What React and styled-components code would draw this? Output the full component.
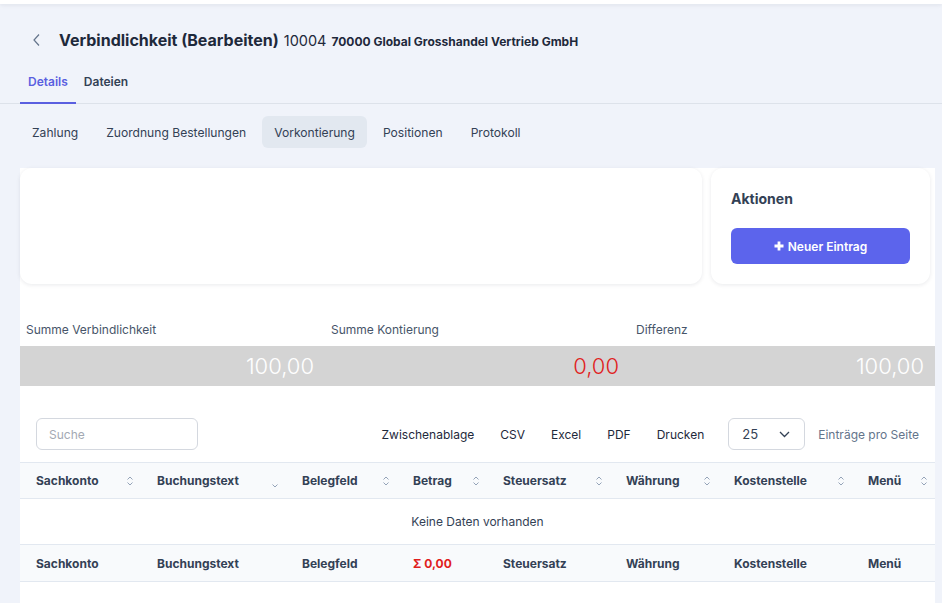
import styled, { createGlobalStyle } from 'styled-components'

const GlobalStyle = createGlobalStyle`
  * { box-sizing: border-box; }
  body {
    margin: 0;
    background: #f0f3fa;
    font-family: Inter, "Noto Sans", sans-serif;
    color: #1e293b;
  }
`

const COLUMNS = '121px 145px 111px 90px 123px 108px 134px 83px'

const TopStrip = styled.div`
  height: 4px;
  background: #ffffff;
  box-shadow: 0 1px 4px rgba(15, 23, 42, 0.08);
`

const Header = styled.header`
  display: flex;
  align-items: center;
  height: 60px;
  padding: 11px 0 0 32px;
`

const TitleLine = styled.div`
  display: flex;
  align-items: baseline;
  gap: 5px;
`

const BackButton = styled.span`
  display: inline-flex;
  margin-right: 17px;
  color: #64748b;
`

const Title = styled.h1`
  margin: 0;
  font-size: 16px;
  font-weight: 700;
  color: #1e293b;
`

const Number = styled.span`
  font-size: 14.5px;
  font-weight: 400;
  color: #1e293b;
`

const Company = styled.span`
  font-size: 12px;
  font-weight: 700;
  color: #1e293b;
`

const TabBar = styled.nav`
  display: flex;
  padding: 0 20px;
  border-bottom: 1px solid #dde2ea;
`

const Tab = styled.div`
  padding: 10px 8px 13px;
  font-size: 12px;
  font-weight: 600;
  color: ${p => (p.$active ? '#5a5fe0' : '#334155')};
  border-bottom: 2px solid ${p => (p.$active ? '#5a5fe0' : 'transparent')};
  margin-bottom: -1px;
`

const Content = styled.main`
  padding: 12px 7px 0 20px;
`

const SubTabs = styled.div`
  display: flex;
  gap: 4px;
`

const SubTab = styled.div`
  height: 32px;
  display: flex;
  align-items: center;
  padding: 0 12px;
  border-radius: 6px;
  font-size: 12.1px;
  color: #334155;
  background: ${p => (p.$active ? '#e2e8f0' : 'transparent')};
`

const Panel = styled.section`
  margin-top: 20px;
  background: #ffffff;
`

const CardRow = styled.div`
  display: grid;
  grid-template-columns: 682px 219px;
  gap: 9px;
`

const Card = styled.div`
  height: 116px;
  background: #ffffff;
  border-radius: 12px;
  box-shadow: 0 1px 4px rgba(15, 23, 42, 0.09);
  padding: ${p => (p.$padded ? '22px 20px' : '0')};
`

const CardTitle = styled.h3`
  margin: 0;
  font-size: 14px;
  font-weight: 700;
  color: #334155;
`

const PrimaryButton = styled.button`
  margin-top: 21px;
  width: 179px;
  height: 36px;
  border: none;
  border-radius: 6px;
  background: #5c64ec;
  color: #ffffff;
  font-family: inherit;
  font-size: 12px;
  font-weight: 600;
  display: flex;
  align-items: center;
  justify-content: center;
  gap: 4px;
`

const Summary = styled.div`
  margin-top: 38px;
  display: grid;
  grid-template-columns: repeat(3, 1fr);
`

const SummaryLabel = styled.div`
  padding: 0 6px 9px;
  font-size: 12px;
  color: #475569;
`

const SummaryValue = styled.div`
  height: 40px;
  display: flex;
  align-items: center;
  justify-content: flex-end;
  padding-right: 11px;
  background: #d4d4d4;
  font-size: 22px;
  font-weight: 300;
  color: ${p => (p.$negative ? '#e01e1e' : '#ffffff')};
`

const Toolbar = styled.div`
  display: flex;
  align-items: center;
  padding: 32px 16px 12px;
`

const Search = styled.input`
  width: 162px;
  height: 32px;
  border: 1px solid #d4d8df;
  border-radius: 6px;
  padding: 0 12px;
  font-family: inherit;
  font-size: 12px;
  color: #1e293b;
  &::placeholder { color: #a3a9b3; }
`

const ExportGroup = styled.div`
  display: flex;
  margin-left: auto;
  margin-right: 11px;
`

const ExportButton = styled.span`
  padding: 0 13px;
  font-size: 12px;
  color: #1e293b;
`

const PageSize = styled.div`
  width: 77px;
  height: 32px;
  border: 1px solid #d4d8df;
  border-radius: 6px;
  display: flex;
  align-items: center;
  justify-content: space-between;
  padding: 0 14px 0 13px;
  font-size: 13px;
  color: #334155;
`

const PageSizeLabel = styled.span`
  margin-left: 13px;
  font-size: 12px;
  color: #64748b;
`

const Row = styled.div`
  display: grid;
  grid-template-columns: ${COLUMNS};
  height: ${p => p.$height || 37}px;
  background: ${p => (p.$shaded ? '#f8fafc' : '#ffffff')};
  border-top: ${p => (p.$top ? '1px solid #e2e8f0' : 'none')};
  border-bottom: 1px solid #e2e8f0;
`

const HeadCell = styled.div`
  display: flex;
  align-items: center;
  justify-content: space-between;
  padding: 0 7px 0 16px;
  font-size: 12px;
  font-weight: 700;
  color: ${p => (p.$red ? '#e01e1e' : '#334155')};
`

const EmptyCell = styled.div`
  grid-column: 1 / -1;
  display: flex;
  align-items: center;
  justify-content: center;
  font-size: 12px;
  color: #334155;
`

const Spacer = styled.div`
  height: 40px;
`

const SortIcon = ({ down }) =>
  down ? (
    <svg width="8" height="14" viewBox="0 0 8 14" fill="none" stroke="#94a3b8" strokeWidth="1" style={{ marginTop: 10 }}>
      <path d="M1.5 5.5 L4 8 L6.5 5.5" />
    </svg>
  ) : (
    <svg width="8" height="12" viewBox="0 0 8 12" fill="none" stroke="#94a3b8" strokeWidth="1">
      <path d="M1.5 4.5 L4 2 L6.5 4.5" />
      <path d="M1.5 7.5 L4 10 L6.5 7.5" />
    </svg>
  )

const columns = [
  { label: 'Sachkonto' },
  { label: 'Buchungstext', down: true },
  { label: 'Belegfeld' },
  { label: 'Betrag', footer: 'Σ 0,00' },
  { label: 'Steuersatz' },
  { label: 'Währung' },
  { label: 'Kostenstelle' },
  { label: 'Menü' },
]

const subTabs = ['Zahlung', 'Zuordnung Bestellungen', 'Vorkontierung', 'Positionen', 'Protokoll']

const sums = [
  { label: 'Summe Verbindlichkeit', value: '100,00' },
  { label: 'Summe Kontierung', value: '0,00', negative: true },
  { label: 'Differenz', value: '100,00' },
]

const App = () => {
  return (
    <>
      <GlobalStyle />
      <TopStrip />
      <Header>
        <BackButton>
          <svg width="10" height="14" viewBox="0 0 10 14" fill="none" stroke="#64748b" strokeWidth="1.2">
            <path d="M7 1.5 L2 7 L7 12.5" />
          </svg>
        </BackButton>
        <TitleLine>
          <Title>Verbindlichkeit (Bearbeiten)</Title>
          <Number>10004</Number>
          <Company>70000 Global Grosshandel Vertrieb GmbH</Company>
        </TitleLine>
      </Header>
      <TabBar>
        <Tab $active>Details</Tab>
        <Tab>Dateien</Tab>
      </TabBar>
      <Content>
        <SubTabs>
          {subTabs.map(t => (
            <SubTab key={t} $active={t === 'Vorkontierung'}>{t}</SubTab>
          ))}
        </SubTabs>
        <Panel>
          <CardRow>
            <Card />
            <Card $padded>
              <CardTitle>Aktionen</CardTitle>
              <PrimaryButton>
                <svg width="10" height="10" viewBox="0 0 10 10" fill="#ffffff">
                  <path d="M3.6 0.5 H6.4 V3.6 H9.5 V6.4 H6.4 V9.5 H3.6 V6.4 H0.5 V3.6 H3.6 Z" />
                </svg>
                Neuer Eintrag
              </PrimaryButton>
            </Card>
          </CardRow>
          <Summary>
            {sums.map(s => (
              <div key={s.label}>
                <SummaryLabel>{s.label}</SummaryLabel>
                <SummaryValue $negative={s.negative}>{s.value}</SummaryValue>
              </div>
            ))}
          </Summary>
          <Toolbar>
            <Search placeholder="Suche" />
            <ExportGroup>
              {['Zwischenablage', 'CSV', 'Excel', 'PDF', 'Drucken'].map(b => (
                <ExportButton key={b}>{b}</ExportButton>
              ))}
            </ExportGroup>
            <PageSize>
              25
              <svg width="11" height="7" viewBox="0 0 11 7" fill="none" stroke="#334155" strokeWidth="1.3">
                <path d="M1 1 L5.5 5.5 L10 1" />
              </svg>
            </PageSize>
            <PageSizeLabel>Einträge pro Seite</PageSizeLabel>
          </Toolbar>
          <Row $shaded $top>
            {columns.map(c => (
              <HeadCell key={c.label}>
                {c.label}
                <SortIcon down={c.down} />
              </HeadCell>
            ))}
          </Row>
          <Row $height={46}>
            <EmptyCell>Keine Daten vorhanden</EmptyCell>
          </Row>
          <Row $shaded>
            {columns.map(c => (
              <HeadCell key={c.label} $red={!!c.footer}>
                {c.footer || c.label}
              </HeadCell>
            ))}
          </Row>
          <Spacer />
        </Panel>
      </Content>
    </>
  )
}

export default App
